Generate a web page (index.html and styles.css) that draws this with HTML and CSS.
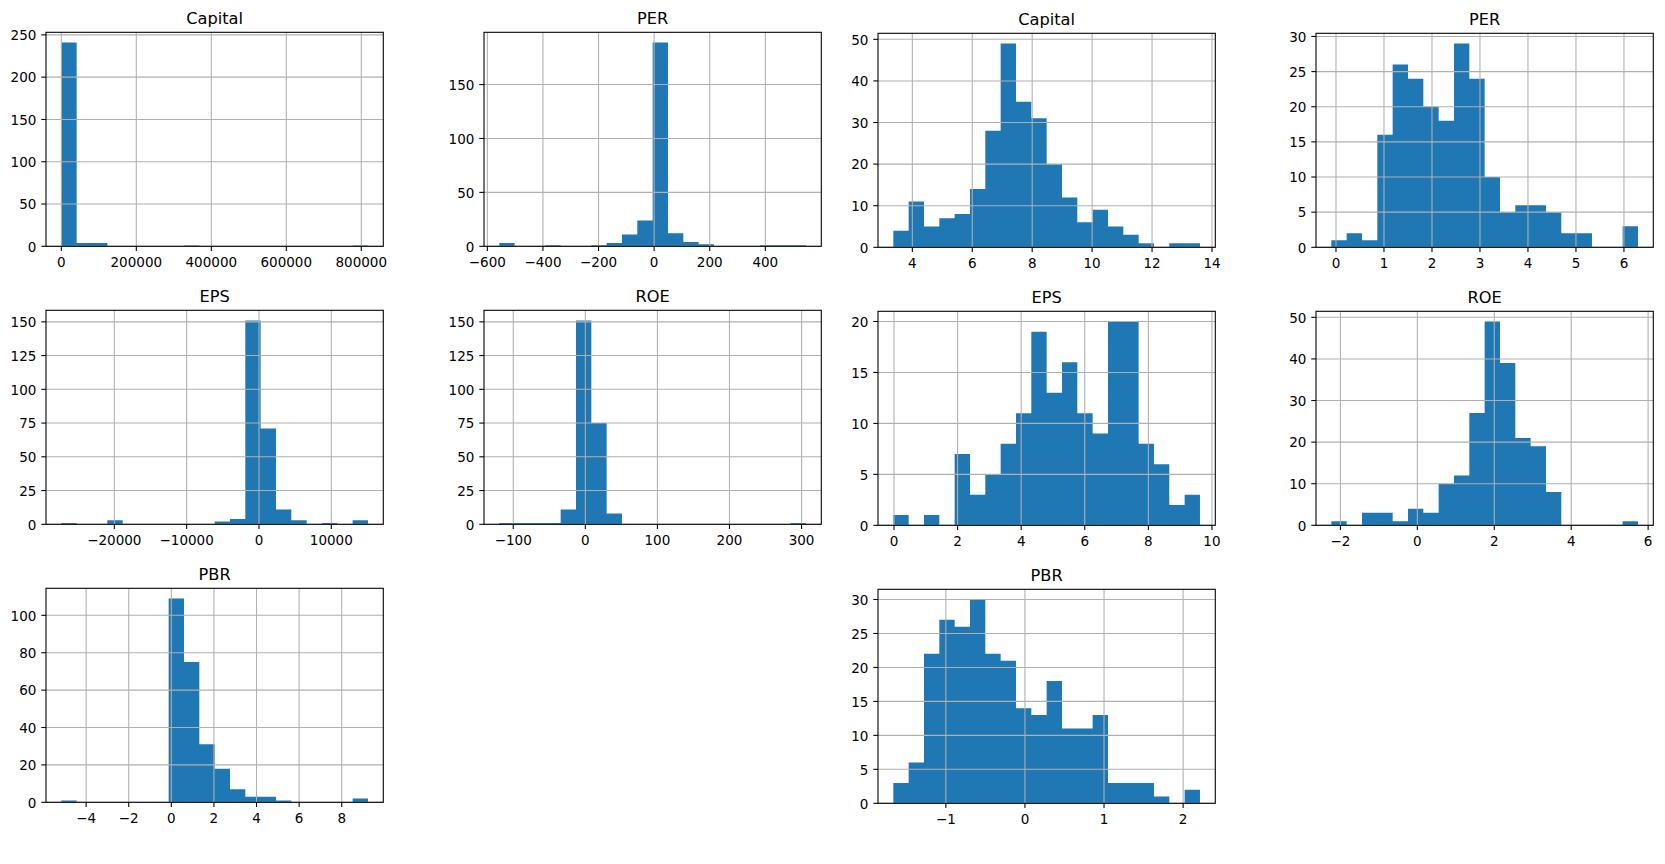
FILE: index.html
```html
<!DOCTYPE html>
<html lang="en">
<head>
<meta charset="utf-8">
<title>Histograms</title>
<link rel="stylesheet" href="styles.css">
</head>
<body>
<main class="page">
  <section class="figure figure-raw">
    <div class="cell" data-plot="capital"></div>
    <div class="cell" data-plot="per"></div>
    <div class="cell" data-plot="eps"></div>
    <div class="cell" data-plot="roe"></div>
    <div class="cell" data-plot="pbr"></div>
    <div class="cell"></div>
  </section>
  <section class="figure figure-log">
    <div class="cell" data-plot="capitalLog"></div>
    <div class="cell" data-plot="perLog"></div>
    <div class="cell" data-plot="epsLog"></div>
    <div class="cell" data-plot="roeLog"></div>
    <div class="cell" data-plot="pbrLog"></div>
    <div class="cell"></div>
  </section>
</main>
<script src="script.js"></script>
</body>
</html>
```
FILE: styles.css
```css
html, body {
  margin: 0;
  padding: 0;
  background: #ffffff;
}
body {
  width: 1665px;
  height: 864px;
  overflow: hidden;
  font-family: "DejaVu Sans", "Liberation Sans", sans-serif;
}
.page {
  display: flex;
  gap: 4px;
  align-items: flex-start;
}
.figure {
  display: grid;
  grid-template-columns: repeat(2, 390px);
  grid-template-rows: repeat(3, 278px);
  column-gap: 48px;
}
.figure-log {
  padding-top: 1px;
}
.cell {
  width: 390px;
  height: 278px;
}
.chart {
  display: block;
  overflow: visible;
}
.chart .bar {
  fill: #1f77b4;
  stroke: none;
}
.chart .grid {
  stroke: #b0b0b0;
  stroke-width: 1.08;
  fill: none;
}
.chart .spine {
  stroke: #000000;
  stroke-width: 1.08;
  fill: none;
}
.chart .tick {
  stroke: #000000;
  stroke-width: 1.08;
}
.chart .tick-label {
  font-family: "DejaVu Sans", sans-serif;
  font-size: 13.5px;
  fill: #000000;
}
.chart .title {
  font-family: "DejaVu Sans", sans-serif;
  font-size: 16.2px;
  fill: #000000;
}
```
FILE: script.js
```js
(function () {
  var NS = 'http://www.w3.org/2000/svg';
  function range(a, b, s) { var r = []; for (var v = a; v <= b + 1e-9; v += s) r.push(Math.round(v * 1000) / 1000); return r; }
  var specs = {
    capital: { title: 'Capital', min: 0, max: 817800,
      counts: [241,4,4,0,0,0,0,0,1,0,0,0,0,0,0,0,0,0,0,1],
      xticks: [0,200000,400000,600000,800000], yticks: range(0,250,50) },
    per: { title: 'PER', min: -556.9, max: 546.2,
      counts: [3,0,0,1,0,0,1,3,11,24,189,12,4,2,0,0,0,1,1,1],
      xticks: [-600,-400,-200,0,200,400], yticks: range(0,150,50) },
    eps: { title: 'EPS', min: -27327, max: 15069,
      counts: [1,0,0,3,0,0,0,0,0,0,2,4,151,71,11,3,0,1,0,3],
      xticks: [-20000,-10000,0,10000], yticks: range(0,150,25) },
    roe: { title: 'ROE', min: -119.3, max: 306.1,
      counts: [1,1,1,1,11,151,75,8,0,0,0,0,0,0,0,0,0,0,0,1],
      xticks: [-100,0,100,200,300], yticks: range(0,150,25) },
    pbr: { title: 'PBR', min: -5.164, max: 9.233,
      counts: [1,0,0,0,0,0,0,109,75,31,18,7,3,3,1,0,0,0,0,2],
      xticks: range(-4,8,2), yticks: range(0,100,20) },
    capitalLog: { title: 'Capital', min: 3.366, max: 13.599,
      counts: [4,11,5,7,8,14,28,49,35,31,20,12,6,9,5,3,1,0,1,1],
      xticks: range(4,14,2), yticks: range(0,50,10) },
    perLog: { title: 'PER', min: -0.097, max: 6.292,
      counts: [1,2,1,16,26,24,20,18,29,24,10,5,6,6,5,2,2,0,0,3],
      xticks: range(0,6,1), yticks: range(0,30,5) },
    epsLog: { title: 'EPS', min: -0.021, max: 9.623,
      counts: [1,0,1,0,7,3,5,8,11,19,13,16,11,9,20,20,8,6,2,3],
      xticks: range(0,10,2), yticks: range(0,20,5) },
    roeLog: { title: 'ROE', min: -2.236, max: 5.736,
      counts: [1,0,3,3,1,4,3,10,12,27,49,39,21,19,8,0,0,0,0,1],
      xticks: range(-2,6,2), yticks: range(0,50,10) },
    pbrLog: { title: 'PBR', min: -1.664, max: 2.213,
      counts: [3,6,22,27,26,30,22,21,14,13,18,11,11,13,3,3,3,1,0,2],
      xticks: range(-1,2,1), yticks: range(0,30,5) }
  };
  function el(tag, attrs, parent) {
    var e = document.createElementNS(NS, tag);
    for (var k in attrs) e.setAttribute(k, attrs[k]);
    parent.appendChild(e);
    return e;
  }
  function fmt(v) { return (v < 0 ? '\u2212' : '') + Math.abs(v); }
  function r2(v) { return Math.round(v * 100) / 100; }
  function draw(cell, p) {
    var W = 337.3, H = 214, L = 46, T = 32.3, TL = 4.7;
    var R = p.max - p.min, x0 = p.min - 0.05 * R, x1 = p.max + 0.05 * R;
    var ymax = Math.max.apply(null, p.counts) * 1.05;
    function sx(v) { return r2(L + (v - x0) / (x1 - x0) * W); }
    function sy(v) { return r2(T + H - (v / ymax) * H); }
    var svg = el('svg', { width: 390, height: 278, viewBox: '0 0 390 278', 'class': 'chart' }, cell);
    var bw = R / p.counts.length;
    var d = 'M' + sx(p.min) + ' ' + sy(0);
    p.counts.forEach(function (c, i) {
      d += ' L' + sx(p.min + i * bw) + ' ' + sy(c) + ' L' + sx(p.min + (i + 1) * bw) + ' ' + sy(c);
    });
    d += ' L' + sx(p.max) + ' ' + sy(0) + ' Z';
    el('path', { d: d, 'class': 'bar' }, svg);
    p.xticks.forEach(function (v) {
      var x = sx(v);
      el('line', { x1: x, y1: T, x2: x, y2: T + H, 'class': 'grid' }, svg);
    });
    p.yticks.forEach(function (v) {
      var y = sy(v);
      el('line', { x1: L, y1: y, x2: L + W, y2: y, 'class': 'grid' }, svg);
    });
    el('rect', { x: L, y: T, width: W, height: H, 'class': 'spine' }, svg);
    p.xticks.forEach(function (v) {
      var x = sx(v);
      el('line', { x1: x, y1: T + H, x2: x, y2: T + H + TL, 'class': 'tick' }, svg);
      var t = el('text', { x: x, y: r2(T + H + 20.3), 'text-anchor': 'middle', 'class': 'tick-label' }, svg);
      t.textContent = fmt(v);
    });
    p.yticks.forEach(function (v) {
      var y = sy(v);
      el('line', { x1: L - TL, y1: y, x2: L, y2: y, 'class': 'tick' }, svg);
      var t = el('text', { x: L - 9.6, y: r2(y + 5.2), 'text-anchor': 'end', 'class': 'tick-label' }, svg);
      t.textContent = fmt(v);
    });
    var tt = el('text', { x: r2(L + W / 2), y: r2(T - 8.2), 'text-anchor': 'middle', 'class': 'title' }, svg);
    tt.textContent = p.title;
  }
  var cells = document.querySelectorAll('.cell[data-plot]');
  for (var i = 0; i < cells.length; i++) {
    var spec = specs[cells[i].getAttribute('data-plot')];
    if (spec) draw(cells[i], spec);
  }
})();
```
